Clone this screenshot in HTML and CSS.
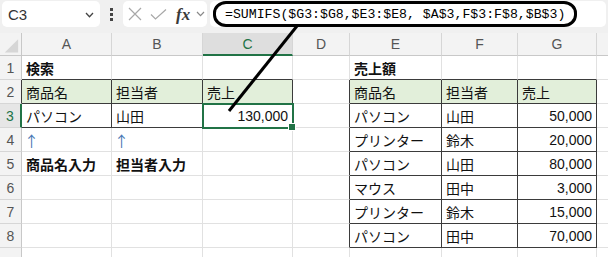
FILE: index.html
```html
<!DOCTYPE html>
<html lang="ja">
<head>
<meta charset="utf-8">
<title>SUMIFS</title>
<link rel="stylesheet" href="styles.css">
</head>
<body>
<div class="app">
  <div class="fbar">
    <div class="namebox">
      <span class="ref">C3</span>
      <svg class="chev" width="9" height="6" viewBox="0 0 9 6"><polyline points="1,1 4.5,4.7 8,1" fill="none" stroke="#444" stroke-width="1.3"/></svg>
    </div>
    <div class="grip"><i></i><i></i><i></i></div>
    <div class="fxbox">
      <svg class="ico-x" width="14" height="14" viewBox="0 0 14 14"><path d="M1 1L13 13M13 1L1 13" stroke="#a8a8a8" stroke-width="1.2" fill="none"/></svg>
      <svg class="ico-ok" width="17" height="11" viewBox="0 0 17 11"><polyline points="1,5.5 5.5,10 16,0.5" fill="none" stroke="#a8a8a8" stroke-width="1.2"/></svg>
      <span class="fx">fx</span>
      <svg class="ico-chev" width="9" height="6" viewBox="0 0 9 6"><polyline points="1,1 4.5,4.7 8,1" fill="none" stroke="#888" stroke-width="1.2"/></svg>
    </div>
    <div class="formula">
      <span class="ftext">=SUMIFS($G3:$G8,$E3:$E8, $A$3,F$3:F$8,$B$3)</span>
      <div class="oval"></div>
    </div>
  </div>

  <div class="sheet">
    <!-- header -->
    <div class="c corner"><svg width="22" height="23" viewBox="0 0 22 23"><polygon points="5,20 19,20 19,6" fill="#d6d6d6"/></svg></div>
    <div class="c ch">A</div>
    <div class="c ch">B</div>
    <div class="c ch selc">C</div>
    <div class="c ch">D</div>
    <div class="c ch">E</div>
    <div class="c ch">F</div>
    <div class="c ch">G</div>
    <div class="c ch"></div>

    <!-- row 1 -->
    <div class="c rh">1</div>
    <div class="c bb b">検索</div>
    <div class="c bb"></div>
    <div class="c bb"></div>
    <div class="c"></div>
    <div class="c bb b">売上額</div>
    <div class="c bb"></div>
    <div class="c bb"></div>
    <div class="c"></div>

    <!-- row 2 -->
    <div class="c rh bl">2</div>
    <div class="c th">商品名</div>
    <div class="c th">担当者</div>
    <div class="c th">売上</div>
    <div class="c bl"></div>
    <div class="c th">商品名</div>
    <div class="c th">担当者</div>
    <div class="c th">売上</div>
    <div class="c"></div>

    <!-- row 3 -->
    <div class="c rh selr">3</div>
    <div class="c t">パソコン</div>
    <div class="c t">山田</div>
    <div class="c t num active">130,000</div>
    <div class="c bl"></div>
    <div class="c t">パソコン</div>
    <div class="c t">山田</div>
    <div class="c t num">50,000</div>
    <div class="c"></div>

    <!-- row 4 -->
    <div class="c rh">4</div>
    <div class="c arrow">↑</div>
    <div class="c arrow">↑</div>
    <div class="c"></div>
    <div class="c bl"></div>
    <div class="c t">プリンター</div>
    <div class="c t">鈴木</div>
    <div class="c t num">20,000</div>
    <div class="c"></div>

    <!-- row 5 -->
    <div class="c rh">5</div>
    <div class="c b">商品名入力</div>
    <div class="c b">担当者入力</div>
    <div class="c"></div>
    <div class="c bl"></div>
    <div class="c t">パソコン</div>
    <div class="c t">山田</div>
    <div class="c t num">80,000</div>
    <div class="c"></div>

    <!-- row 6 -->
    <div class="c rh">6</div>
    <div class="c"></div>
    <div class="c"></div>
    <div class="c"></div>
    <div class="c bl"></div>
    <div class="c t">マウス</div>
    <div class="c t">田中</div>
    <div class="c t num">3,000</div>
    <div class="c"></div>

    <!-- row 7 -->
    <div class="c rh">7</div>
    <div class="c"></div>
    <div class="c"></div>
    <div class="c"></div>
    <div class="c bl"></div>
    <div class="c t">プリンター</div>
    <div class="c t">鈴木</div>
    <div class="c t num">15,000</div>
    <div class="c"></div>

    <!-- row 8 -->
    <div class="c rh">8</div>
    <div class="c"></div>
    <div class="c"></div>
    <div class="c"></div>
    <div class="c bl"></div>
    <div class="c t">パソコン</div>
    <div class="c t">田中</div>
    <div class="c t num">70,000</div>
    <div class="c"></div>

    <!-- row 9 -->
    <div class="c rh"></div>
    <div class="c"></div>
    <div class="c"></div>
    <div class="c"></div>
    <div class="c"></div>
    <div class="c"></div>
    <div class="c"></div>
    <div class="c"></div>
    <div class="c"></div>
  </div>

  <svg class="pointer" width="608" height="257" viewBox="0 0 608 257"><line x1="297" y1="26" x2="229" y2="111" stroke="#000" stroke-width="3"/></svg>
</div>
</body>
</html>
```

FILE: styles.css
```css
* { box-sizing: border-box; }
html, body { margin: 0; padding: 0; }
body {
  width: 608px;
  height: 257px;
  overflow: hidden;
  background: #fff;
  font-family: "Liberation Sans", "Noto Sans CJK JP", sans-serif;
}
.app {
  position: relative;
  width: 608px;
  height: 257px;
  overflow: hidden;
}

/* formula bar */
.fbar {
  height: 33px;
  background: #f0f0f0;
  display: flex;
  align-items: flex-start;
  padding: 1px 2px 0 2px;
}
.namebox {
  width: 98px;
  height: 26px;
  background: #fff;
  border-radius: 5px;
  display: flex;
  align-items: center;
  justify-content: space-between;
  padding: 0 6px 0 6px;
}
.ref {
  font-size: 15px;
  color: #333;
}
.chev { margin-top: 1px; }
.grip {
  width: 23px;
  height: 26px;
  display: flex;
  flex-direction: column;
  align-items: center;
  justify-content: center;
  gap: 2px;
}
.grip i {
  display: block;
  width: 2.5px;
  height: 3px;
  background: #444;
}
.fxbox {
  width: 84px;
  height: 26px;
  background: #fff;
  border-radius: 5px;
  display: flex;
  align-items: center;
}
.ico-x { margin-left: 5px; }
.ico-ok { margin-left: 8px; }
.fx {
  margin-left: 9px;
  width: 15px;
  font-family: "Liberation Serif", serif;
  font-style: italic;
  font-weight: 700;
  font-size: 17px;
  color: #3a3a3a;
  line-height: 1;
}
.ico-chev { margin-left: 5px; }
.formula {
  flex: 1;
  margin-left: 3px;
  height: 26px;
  background: #fff;
  border-radius: 5px;
  position: relative;
  display: flex;
  align-items: center;
  padding-left: 15px;
}
.ftext {
  font-family: "Liberation Mono", monospace;
  font-size: 13.2px;
  color: #000;
  white-space: nowrap;
  margin-top: 1px;
}
.oval {
  position: absolute;
  left: 3px;
  top: 0;
  width: 364px;
  height: 26px;
  border: 3px solid #000;
  border-radius: 13px / 12px;
}

/* sheet */
.sheet {
  display: grid;
  grid-template-columns: 22px 90px 91px 90px 57px 92px 76px 79px 40px;
  grid-template-rows: 23px;
  grid-auto-rows: 24px;
}
.c {
  border-right: 1px solid #e1e1e1;
  border-bottom: 1px solid #e1e1e1;
  font-size: 14px;
  padding: 0 4px;
  display: flex;
  align-items: center;
  white-space: nowrap;
  color: #111;
  overflow: visible;
}
.corner {
  background: #f3f3f3;
  padding: 0;
  border-right-color: #c8c8c8;
  border-bottom-color: #c8c8c8;
}
.ch {
  background: #f3f3f3;
  border-right-color: #d6d6d6;
  border-bottom-color: #c8c8c8;
  justify-content: center;
  color: #555;
}
.rh {
  background: #f3f3f3;
  border-right-color: #c8c8c8;
  border-bottom-color: #d6d6d6;
  justify-content: center;
  color: #555;
  padding: 0;
}
.selc {
  background: #dedede;
  color: #217346;
  border-bottom: 2px solid #217346;
}
.selr {
  background: #e6e6e6;
  color: #217346;
  border-right: 2px solid #217346;
}
.th {
  background: #e2efda;
  border-right-color: #3b3b3b;
  border-bottom-color: #3b3b3b;
}
.t {
  border-right-color: #3b3b3b;
  border-bottom-color: #3b3b3b;
}
.bb { border-bottom-color: #3b3b3b; }
.bl { border-right-color: #3b3b3b; }
.num { justify-content: flex-end; }
.b { font-weight: 700; }
.arrow {
  color: #4a78b5;
  padding-left: 2px;
  font-family: "Noto Sans CJK JP", sans-serif;
  font-size: 15px;
  padding-top: 2px;
}
.active {
  position: relative;
  z-index: 1;
  outline: 2px solid #217346;
  outline-offset: -1px;
}
.active::after {
  content: "";
  position: absolute;
  right: -4px;
  bottom: -4px;
  width: 6px;
  height: 6px;
  background: #217346;
  border: 1px solid #fff;
}

.pointer {
  position: absolute;
  left: 0;
  top: 0;
  pointer-events: none;
  z-index: 5;
}
```
